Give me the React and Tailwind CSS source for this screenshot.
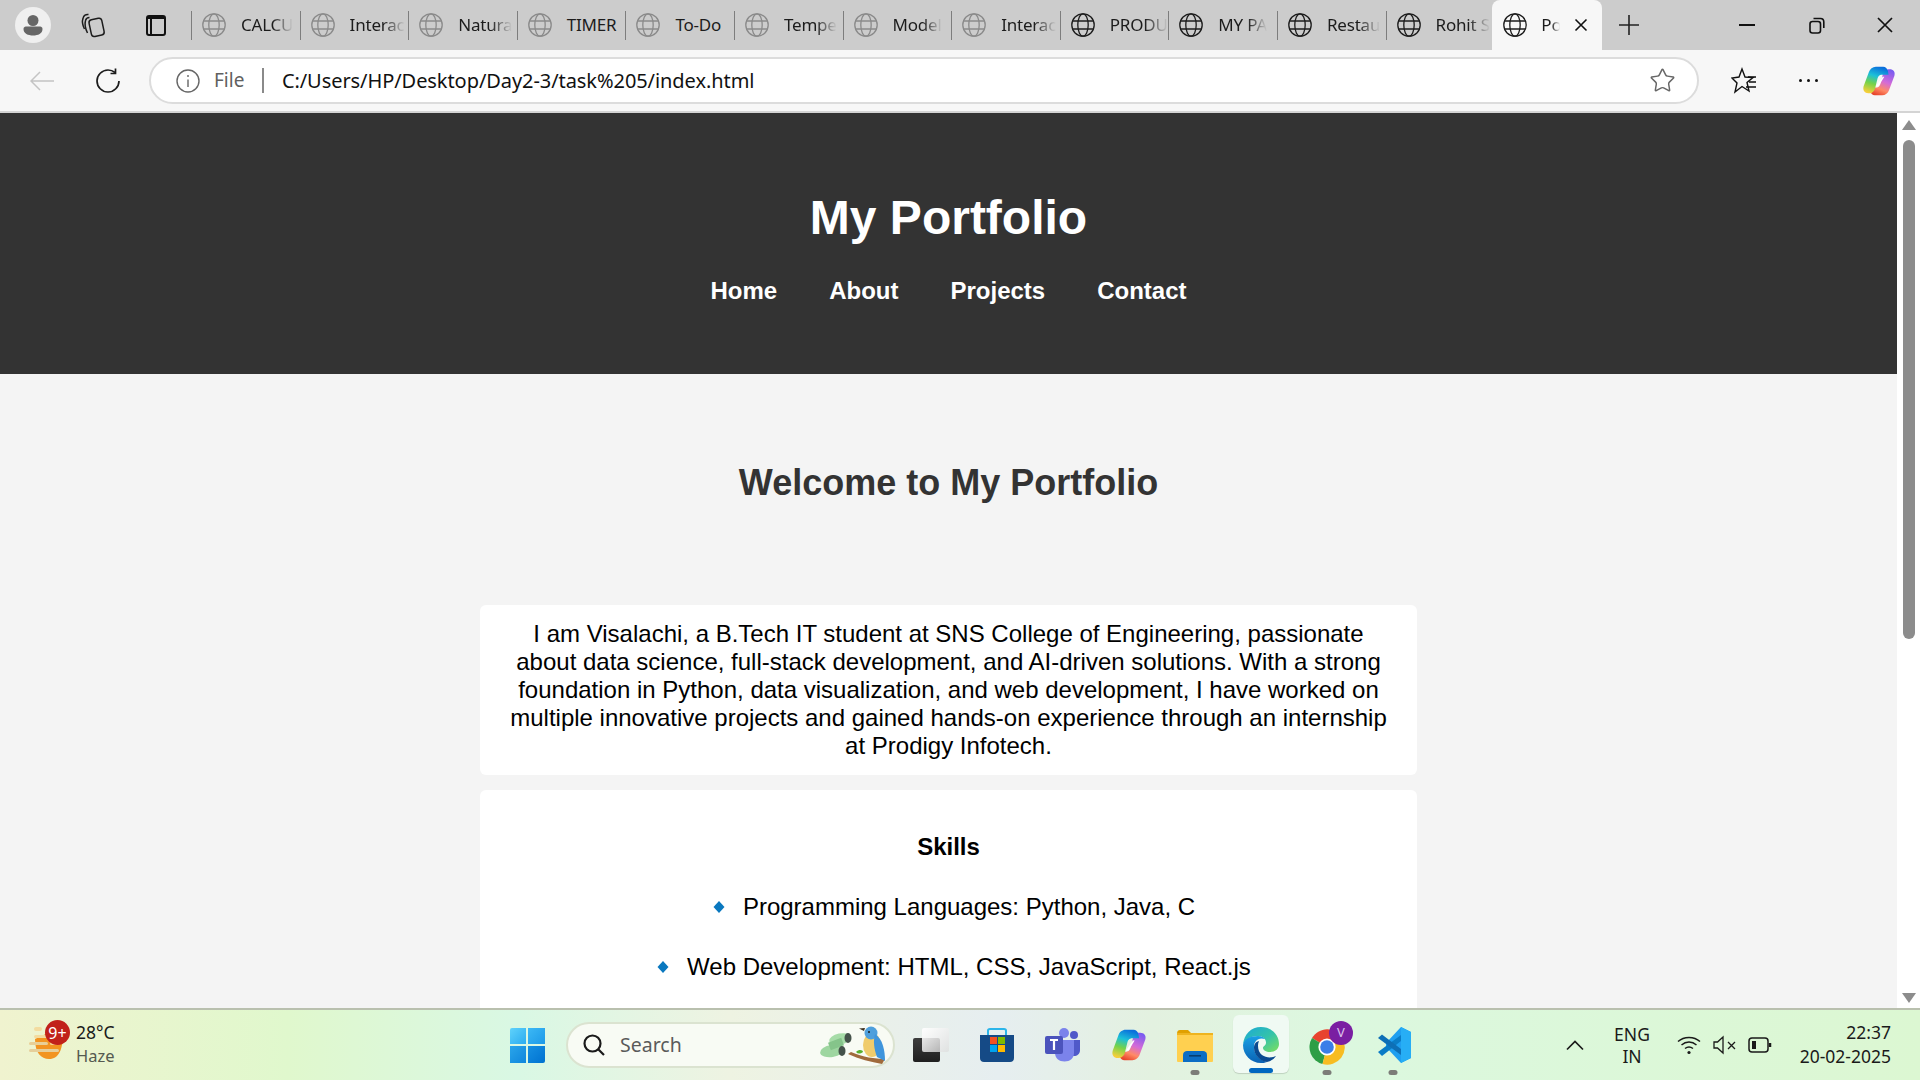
import React from "react";
import { Star } from "lucide-react";

const tabs = [
  ["CALCU", 0, 1], ["Interac", 0, 1], ["Natura", 0, 1], ["TIMER", 0, 0],
  ["To-Do", 0, 0], ["Tempe", 0, 1], ["Model", 0, 1], ["Interac", 0, 1],
  ["PRODU", 1, 1], ["MY PA", 1, 1], ["Restau", 1, 1], ["Rohit S", 1, 1],
];

function Globe({ dim, size = 24 }) {
  const c = dim ? "#8a8a8a" : "#1c1c1c";
  return (
    <svg width={size} height={size} viewBox="0 0 24 24" fill="none" stroke={c} strokeWidth="1.3" className="shrink-0">
      <circle cx="12" cy="12" r="11.2" />
      <ellipse cx="12" cy="12" rx="5.2" ry="11.2" />
      <path d="M1.8 8H22.2M1.8 16H22.2" />
    </svg>
  );
}

function Copilot({ size, id }) {
  return (
    <svg width={size} height={size} viewBox="0 0 32 32">
      <defs>
        <linearGradient id={id + "a"} x1="0.6" y1="0" x2="0.3" y2="1">
          <stop offset="0" stopColor="#0a6fdc" />
          <stop offset="0.35" stopColor="#1cc0d8" />
          <stop offset="0.65" stopColor="#74d24a" />
          <stop offset="1" stopColor="#f6cf3a" />
        </linearGradient>
        <linearGradient id={id + "b"} x1="0.7" y1="0" x2="0.3" y2="1">
          <stop offset="0" stopColor="#7b5cf0" />
          <stop offset="0.45" stopColor="#d46bd8" />
          <stop offset="0.75" stopColor="#ff8a66" />
          <stop offset="1" stopColor="#e8452c" />
        </linearGradient>
      </defs>
      <path d="M19 29.5H12C10 29.5 8 28 7.5 25L7 22H13C16 22 17 20 17.5 18L19.5 10C20 7 22 5 25 5H26C29.5 5 31.5 7.5 30.5 11L25.5 24.5C24.5 27.5 22 29.5 19 29.5Z" fill={`url(#${id}b)`} />
      <path d="M13 2.5H20C22 2.5 24 4 24.5 7L25 10H19C16 10 15 12 14.5 14L12.5 22C12 25 10 27.5 7 27.5H6C2.5 27.5 0.5 25 1.5 21L6.5 7.5C7.5 4.5 10 2.5 13 2.5Z" fill={`url(#${id}a)`} />
      <path d="M19.5 12H21L15.5 21H13.2Z" fill="#ffffff" />
    </svg>
  );
}

function Tab({ label, dark, fade }) {
  return (
    <div className="relative flex h-[29px] w-[108.6px] shrink-0 items-center border-l-[1.5px] border-[#7d7d7d] pl-[10px]">
      <Globe dim={!dark} />
      <div className={"ml-[15px] whitespace-nowrap text-[17px] tracking-[-0.2px] text-[#1c1c1c] " + (fade ? "[mask-image:linear-gradient(to_right,black_60%,transparent_100%)]" : "")}>
        {label}
      </div>
    </div>
  );
}

function TabStrip() {
  return (
    <div className="flex h-[50px] items-center bg-[#cccccc] font-['Noto_Sans',sans-serif]">
      <div className="flex w-[191px] shrink-0 items-center">
        <div className="ml-[15px] flex h-[36px] w-[36px] items-center justify-center rounded-full bg-[#efefef]">
          <svg width="24" height="24" viewBox="0 0 24 24" fill="#666666">
            <circle cx="12" cy="7.5" r="5.5" />
            <path d="M2.5 16C2.5 14 4 13.5 6 13.5H18C20 13.5 21.5 14 21.5 16C21.5 20.5 17 22.5 12 22.5C7 22.5 2.5 20.5 2.5 16Z" />
          </svg>
        </div>
        <div className="ml-[29px]">
          <svg width="26" height="26" viewBox="0 0 26 26" fill="none" stroke="#1c1c1c" strokeWidth="1.5">
            <rect x="10" y="7" width="13" height="17" rx="3" transform="rotate(-12 16 15)" fill="#cccccc" />
            <path d="M7.5 21C5.5 17 4.5 12 5.5 8.5C6 6.5 7.5 5.5 9.5 5.5" />
            <path d="M4.5 17C2.5 13 2 9 3 6.5C3.5 3.5 6 2 8.5 2.5" />
          </svg>
        </div>
        <div className="ml-[40px] flex h-[21px] w-[20px] flex-col rounded-[3px] border-2 border-[#111111]">
          <div className="h-[3px] bg-[#111111]" />
          <div className="h-full w-[4px] border-r-2 border-[#111111]" />
        </div>
      </div>
      {tabs.map(([l, d, f], i) => (
        <Tab key={i} label={l} dark={d} fade={f} />
      ))}
      <div className="-ml-[2px] flex h-[50px] w-[110px] shrink-0 items-center self-end rounded-t-[8px] bg-[#f7f7f7] pl-[11px]">
        <Globe />
        <div className="ml-[14px] w-[19px] whitespace-nowrap text-[17px] text-[#1c1c1c] [mask-image:linear-gradient(to_right,black_55%,transparent_100%)]">Po</div>
        <svg className="ml-[14px]" width="14" height="14" viewBox="0 0 14 14" stroke="#111111" strokeWidth="1.6"><path d="M1.5 1.5L12.5 12.5M12.5 1.5L1.5 12.5" /></svg>
      </div>
      <svg className="ml-[17px]" width="20" height="20" viewBox="0 0 20 20" stroke="#222222" strokeWidth="1.6"><path d="M0 10H20M10 0V20" /></svg>
      <svg className="ml-[100px]" width="16" height="2" viewBox="0 0 16 2" fill="#111111"><rect width="16" height="2" /></svg>
      <svg className="ml-[54px]" width="16" height="17" viewBox="0 0 16 17" fill="none" stroke="#111111" strokeWidth="1.6">
        <rect x="1" y="4.5" width="10.5" height="11.5" rx="2.5" />
        <path d="M4.5 1.5H11.5C13.5 1.5 14.8 2.8 14.8 5V11" />
      </svg>
      <svg className="ml-[52px]" width="16" height="16" viewBox="0 0 16 16" stroke="#111111" strokeWidth="1.7"><path d="M1 1L15 15M15 1L1 15" /></svg>
    </div>
  );
}

function Toolbar() {
  return (
    <div className="flex h-[63px] items-center border-b-2 border-[#d4d4d4] bg-[#f7f7f7] font-['Noto_Sans',sans-serif]">
      <svg className="ml-[30px]" width="24" height="20" viewBox="0 0 24 20" fill="none" stroke="#c4c4c4" strokeWidth="1.5"><path d="M24 10H1M10 1L1 10L10 19" /></svg>
      <svg className="ml-[41px]" width="26" height="26" viewBox="0 0 26 26" fill="none" stroke="#1c1c1c" strokeWidth="1.7">
        <path d="M20 4.5C17.8 2.7 15.5 2 13 2C7 2 2 7 2 13C2 19 7 24 13 24C19 24 24 19 24 13" />
        <path d="M20.5 0.5V5.5H15.5" />
      </svg>
      <div className="ml-[28px] flex h-[47px] w-[1550px] items-center rounded-full border-2 border-[#dcdcdc] bg-white">
        <svg className="ml-[25px]" width="24" height="24" viewBox="0 0 24 24" fill="none" stroke="#666666" strokeWidth="1.4">
          <circle cx="12" cy="12" r="11" />
          <path d="M12 10.5V18M12 6V8" />
        </svg>
        <span className="ml-[14px] text-[19px] text-[#606060]">File</span>
        <div className="ml-[18px] h-[25px] w-[1.5px] bg-[#8a8a8a]" />
        <span className="ml-[18px] text-[20px] tracking-[-0.07px] text-[#111111]">C:/Users/HP/Desktop/Day2-3/task%205/index.html</span>
        <Star className="ml-auto mr-[21px]" size={27} strokeWidth={1.3} color="#666666" />
      </div>
      <svg className="ml-[32px]" width="26" height="28" viewBox="0 0 26 28" fill="none" stroke="#111111" strokeWidth="1.4">
        <path d="M11 2L14 10L22 10.5L16 15.5L18 24L11 19.5L4 25L6 16L1 11L8 10Z" />
        <path d="M17 10H25M18 15H25M15 20H25" />
      </svg>
      <div className="ml-[42px] flex gap-[5px]">
        <div className="h-[3px] w-[3px] rounded-full bg-[#111111]" />
        <div className="h-[3px] w-[3px] rounded-full bg-[#111111]" />
        <div className="h-[3px] w-[3px] rounded-full bg-[#111111]" />
      </div>
      <div className="ml-[44px]"><Copilot size={34} id="cp1" /></div>
    </div>
  );
}

function Diamond() {
  return <svg width="12" height="12" viewBox="0 0 12 12" className="mr-[18px] shrink-0"><path d="M6 0L11.5 6L6 12L0.5 6Z" fill="#0a78bf" /></svg>;
}

function Scrollbar() {
  return (
    <div className="flex w-[23px] shrink-0 flex-col items-center bg-white pt-[7px]">
      <svg width="14" height="10" viewBox="0 0 14 10" fill="#8c8c8c"><path d="M7 0L14 10H0Z" /></svg>
      <div className="mt-[10px] h-[499px] w-[12px] rounded-full bg-[#8c8c8c]" />
      <svg className="mt-auto mb-[5px]" width="14" height="10" viewBox="0 0 14 10" fill="#8c8c8c"><path d="M7 10L14 0H0Z" /></svg>
    </div>
  );
}

function Page() {
  return (
    <div className="flex h-[895px] overflow-hidden">
      <div className="flex-1 overflow-hidden bg-[#f4f4f4] font-['Liberation_Sans',Arial,sans-serif] text-[24px] leading-[28px] text-black">
        <header className="h-[261px] bg-[#333333] pt-[78px] text-center text-white">
          <h1 className="text-[48px] font-bold leading-[53px]">My Portfolio</h1>
          <nav className="mt-[33px] flex justify-center gap-[52px] font-bold">
            <span>Home</span><span>About</span><span>Projects</span><span>Contact</span>
          </nav>
        </header>
        <main className="flex flex-col items-center pt-[88px]">
          <h2 className="text-[36px] font-bold leading-[41px] text-[#333333]">Welcome to My Portfolio</h2>
          <p className="mt-[102px] w-[937px] rounded-[6px] bg-white px-[25px] py-[15px] text-center">
            I am Visalachi, a B.Tech IT student at SNS College of Engineering, passionate about data science, full-stack development, and AI-driven solutions. With a strong foundation in Python, data visualization, and web development, I have worked on multiple innovative projects and gained hands-on experience through an internship at Prodigy Infotech.
          </p>
          <section className="mt-[15px] w-[937px] rounded-[6px] bg-white pb-[60px] pt-[43px] text-center">
            <h3 className="font-bold">Skills</h3>
            <ul className="mt-[32px] flex flex-col gap-[32px] pl-[11px]">
              <li className="flex items-center justify-center"><Diamond />Programming Languages: Python, Java, C</li>
              <li className="flex items-center justify-center"><Diamond />Web Development: HTML, CSS, JavaScript, React.js</li>
            </ul>
          </section>
        </main>
      </div>
      <Scrollbar />
    </div>
  );
}

function Dot() {
  return <div className="absolute bottom-[5px] left-1/2 h-[5px] w-[9px] -translate-x-1/2 rounded-full bg-[#7c7c78]" />;
}

function TaskIcon({ children, dot, active }) {
  return (
    <div className="relative flex h-[70px] w-[66px] shrink-0 items-center justify-center">
      {active && <div className="absolute left-[5px] top-[5px] h-[58px] w-[56px] rounded-[6px] bg-[#f0faf3] shadow-[0_1px_1px_rgba(0,0,0,0.15)]" />}
      <div className="relative">{children}</div>
      {dot && <Dot />}
      {active && <div className="absolute bottom-[7px] left-1/2 h-[5px] w-[24px] -translate-x-1/2 rounded-full bg-[#0067c0]" />}
    </div>
  );
}

function Taskbar() {
  return (
    <div className="flex h-[72px] items-center border-t-2 border-[#b9c0ae] bg-[linear-gradient(90deg,#f0f3cf_0%,#e0f8cd_15%,#d9f8e4_27%,#eef3e2_38%,#e6eef0_52%,#e3f1e0_60%,#dcf8df_70%,#dcf7d2_100%)] font-['Noto_Sans',sans-serif] text-[#1a1a1a]">
      <div className="relative flex w-[494px] shrink-0 items-center">
        <svg className="ml-[28px] -mt-[4px]" width="38" height="36" viewBox="0 0 38 36">
          <path d="M7 14C7 28 13 34 21 34C31 34 35 24 35 8H20Z" fill="#f29420" />
          <g fill="#f3dca0">
            <rect x="6" y="2" width="8" height="4" rx="2" />
            <rect x="6" y="10" width="14" height="3" rx="1.5" />
            <rect x="1" y="17" width="19" height="3" rx="1.5" fill="#e8cf96" />
            <rect x="22" y="17" width="8" height="3" rx="1.5" fill="#f3d28e" />
            <rect x="1" y="24" width="30" height="3" rx="1.5" fill="#e6cf9a" />
          </g>
        </svg>
        <div className="absolute left-[45px] top-[-2px] flex h-[25px] w-[25px] items-center justify-center rounded-full bg-[#c1211a] text-[16px] text-white">9+</div>
        <div className="ml-[10px] -mt-[2px] flex flex-col">
          <span className="text-[17.5px] leading-[24px]">28°C</span>
          <span className="text-[16.5px] leading-[24px] text-[#555a50]">Haze</span>
        </div>
      </div>
      <div className="flex w-[66px] shrink-0 justify-center">
        <div className="grid h-[35px] w-[35px] grid-cols-2 gap-[1.5px]">
          <div className="rounded-tl-[2px] bg-[linear-gradient(135deg,#5fd2fb,#2bacf0)]" />
          <div className="bg-[linear-gradient(135deg,#3cb8f5,#1c9ae8)]" />
          <div className="bg-[linear-gradient(135deg,#2aa5ea,#0f86dc)]" />
          <div className="rounded-br-[2px] bg-[linear-gradient(135deg,#1690e2,#0072d0)]" />
        </div>
      </div>
      <div className="ml-[6px] flex h-[46px] w-[329px] shrink-0 items-center rounded-full border-2 border-[#dbe3d0] bg-[#f8fbf4]">
        <svg className="ml-[14px]" width="24" height="24" viewBox="0 0 24 24" fill="none" stroke="#1a1a1a" strokeWidth="2.2">
          <circle cx="10.5" cy="10.5" r="8" />
          <path d="M16.5 16.5L22 22" />
        </svg>
        <span className="ml-[14px] text-[19.5px] text-[#5a5a5a]">Search</span>
        <svg className="ml-auto mr-[2px]" width="72" height="40" viewBox="0 0 72 40">
          <g>
            <ellipse cx="21" cy="14" rx="11" ry="5.5" fill="#a6dca8" transform="rotate(-12 21 14)" />
            <ellipse cx="13" cy="26" rx="12" ry="6" fill="#9ed6a0" transform="rotate(-8 13 26)" />
            <rect x="10" y="15" width="14" height="8" fill="#85c48a" transform="rotate(-20 17 19)" />
            <ellipse cx="29" cy="13" rx="3.5" ry="5" fill="#44524a" />
            <ellipse cx="23" cy="26" rx="3.5" ry="5" fill="#44524a" />
          </g>
          <path d="M29 29C40 34 52 37 63 39L66 34C56 34 44 32 32 27Z" fill="#a06a3c" />
          <path d="M37 27C40 24 44 25 44 27C41 29 39 29 37 27Z" fill="#58b030" />
          <ellipse cx="53" cy="20" rx="9" ry="12" fill="#f0cc6c" />
          <circle cx="52" cy="8" r="6.5" fill="#4e9fdc" />
          <path d="M45 6L40 3.5L46 3Z" fill="#3c3020" />
          <path d="M56 9C64 14 66 26 66 36L58 32C55 24 54 16 56 9Z" fill="#3f95dc" />
          <circle cx="50" cy="7" r="1" fill="#1a1a1a" />
        </svg>
      </div>
      <div className="ml-[3px]" />
      <TaskIcon>
        <div className="relative h-[34px] w-[36px]">
          <div className="absolute bottom-0 left-0 h-[24px] w-[27px] rounded-[2px] bg-[linear-gradient(180deg,#3d3d3d,#1f1f1f)]" />
          <div className="absolute right-0 top-0 h-[24px] w-[27px] rounded-[2px] bg-[linear-gradient(135deg,rgba(255,255,255,0.95),rgba(220,220,220,0.7))]" />
        </div>
      </TaskIcon>
      <TaskIcon>
        <svg width="36" height="36" viewBox="0 0 36 36" fill="none">
          <path d="M9 8V3.5C9 2.5 10 2 11 2H25C26 2 27 2.5 27 3.5V8" stroke="#2cb5ea" strokeWidth="2" />
          <path d="M1 8H35V31C35 33.5 33.5 35 31 35H5C2.5 35 1 33.5 1 31Z" fill="#154a86" />
          <rect x="11" y="10" width="7" height="7" fill="#f25022" />
          <rect x="19" y="10" width="7" height="7" fill="#7fba00" />
          <rect x="11" y="18" width="7" height="7" fill="#00a4ef" />
          <rect x="19" y="18" width="7" height="7" fill="#ffb900" />
        </svg>
      </TaskIcon>
      <TaskIcon>
        <svg width="36" height="34" viewBox="0 0 36 34">
          <circle cx="29" cy="7" r="4" fill="#5059c9" />
          <path d="M24 12H35V22C35 26 32 28 29 28C27 28 25 27 24 26Z" fill="#5059c9" />
          <circle cx="19" cy="5" r="5" fill="#7b83eb" />
          <path d="M10 12H29V25C29 30 25 33.5 19.5 33.5C14 33.5 10 30 10 25Z" fill="#7b83eb" />
          <rect x="0" y="8" width="18" height="18" rx="2" fill="#4b53bc" />
          <path d="M5 12H13M9 12V22" stroke="#ffffff" strokeWidth="2.2" />
        </svg>
      </TaskIcon>
      <TaskIcon>
        <Copilot size={36} id="cp2" />
      </TaskIcon>
      <TaskIcon dot>
        <svg width="36" height="34" viewBox="0 0 36 34">
          <path d="M0 6C0 3 1 2 3 2H11L15 6H0Z" fill="#e0a000" />
          <rect x="0" y="5" width="36" height="29" rx="1" fill="#ffd050" />
          <rect x="0" y="5" width="36" height="2" fill="#eeb420" />
          <path d="M6 34V27C6 24 8 23 10 23H26C28 23 30 24 30 27V34Z" fill="#0b6dc4" />
          <rect x="12" y="27" width="12" height="1.6" fill="#073e70" />
        </svg>
      </TaskIcon>
      <TaskIcon active>
        <svg width="36" height="36" viewBox="0 0 36 36">
          <defs>
            <linearGradient id="eg1" x1="0" y1="0" x2="1" y2="1">
              <stop offset="0" stopColor="#1aa8d8" />
              <stop offset="0.55" stopColor="#35c4a8" />
              <stop offset="1" stopColor="#7ee05c" />
            </linearGradient>
            <linearGradient id="eg2" x1="0" y1="0" x2="0" y2="1">
              <stop offset="0" stopColor="#1aa0e4" />
              <stop offset="1" stopColor="#0a62b4" />
            </linearGradient>
          </defs>
          <path d="M18 0C28 0 36 7 36 17C36 22 32 25 27 25C23 25 20 23 20 21C20 19 23 19 23 15.5C23 12 20 9 15 9C7 9 1 14 0 18C1 7 8 0 18 0Z" fill="url(#eg1)" />
          <path d="M0 18C1 12 7 9 15 9C19 9 21 10.5 22 12C15 10 11 14 11 20C11 27 16 33 24 35C21.5 36 20 36 18 36C8 36 0 28 0 18Z" fill="url(#eg2)" />
          <path d="M16 14C12 15 11 18 11 21C11 28 17 34 24 35C28 34 31 32 33 29C29 31 23 31 19 28C15 25 14 18 16 14Z" fill="#0b4a90" />
        </svg>
      </TaskIcon>
      <TaskIcon dot>
        <div className="relative h-[36px] w-[36px]">
          <svg width="36" height="36" viewBox="0 0 36 36" className="mt-[4px]">
            <path d="M18 18L3 9A17.5 17.5 0 0 1 33.2 9Z" fill="#e8432e" />
            <path d="M18 18L3 9A17.5 17.5 0 0 0 13.5 35Z" fill="#2e9e46" />
            <path d="M18 18L33.2 9A17.5 17.5 0 0 1 13.5 35Z" fill="#f7bc22" />
            <circle cx="18" cy="18" r="8.6" fill="#ffffff" />
            <circle cx="18" cy="18" r="6.8" fill="#3b7ee8" />
          </svg>
          <div className="absolute -right-[8px] -top-[8px] flex h-[24px] w-[24px] items-center justify-center rounded-full bg-[#7a1fa2] text-[13px] text-[#dcc4ec]">V</div>
        </div>
      </TaskIcon>
      <TaskIcon dot>
        <svg width="36" height="36" viewBox="0 0 36 36">
          <path d="M26 0L36 5V31L26 36L11 20V16Z" fill="#1f9ff0" />
          <path d="M26 0L26 36L36 31V5Z" fill="#27aef5" />
          <path d="M3 25L26 8V14L7 29Z" fill="#0a7cc6" />
          <path d="M3 11L7 7.5L26 22V28Z" fill="#0e6fb6" />
        </svg>
      </TaskIcon>
      <svg className="ml-[139px]" width="20" height="12" viewBox="0 0 20 12" fill="none" stroke="#1a1a1a" strokeWidth="1.7"><path d="M2 10.5L10 2.5L18 10.5" /></svg>
      <div className="ml-[22px] flex w-[50px] flex-col items-center text-[17.5px] leading-[22px]">
        <span>ENG</span><span>IN</span>
      </div>
      <svg className="ml-[20px]" width="24" height="20" viewBox="0 0 24 20" fill="none" stroke="#1a1a1a" strokeWidth="1.5">
        <path d="M1 6.5C7 1 17 1 23 6.5M4.5 10C9 6 15 6 19.5 10M8 13.5C10.5 11.5 13.5 11.5 16 13.5" />
        <circle cx="12" cy="17.5" r="1.6" fill="#1a1a1a" stroke="none" />
      </svg>
      <svg className="ml-[12px]" width="24" height="20" viewBox="0 0 24 20" fill="none" stroke="#1a1a1a" strokeWidth="1.3">
        <path d="M1 7V13H4.5L10 18V2L4.5 7Z" />
        <path d="M15 7L22 14M22 7L15 14" />
      </svg>
      <svg className="ml-[11px]" width="24" height="16" viewBox="0 0 24 16" fill="none" stroke="#1a1a1a" strokeWidth="1.5">
        <rect x="1" y="1" width="19" height="14" rx="3" />
        <rect x="4" y="4" width="4" height="8" fill="#1a1a1a" stroke="none" />
        <path d="M22 6V10" strokeWidth="2.5" />
      </svg>
      <div className="ml-auto -mt-[3px] flex flex-col items-end pr-[29px] text-[17.5px] leading-[24px]">
        <span>22:37</span><span>20-02-2025</span>
      </div>
    </div>
  );
}

export default function App() {
  return (
    <div className="flex h-[1080px] w-[1920px] flex-col overflow-hidden">
      <TabStrip />
      <Toolbar />
      <Page />
      <Taskbar />
    </div>
  );
}
